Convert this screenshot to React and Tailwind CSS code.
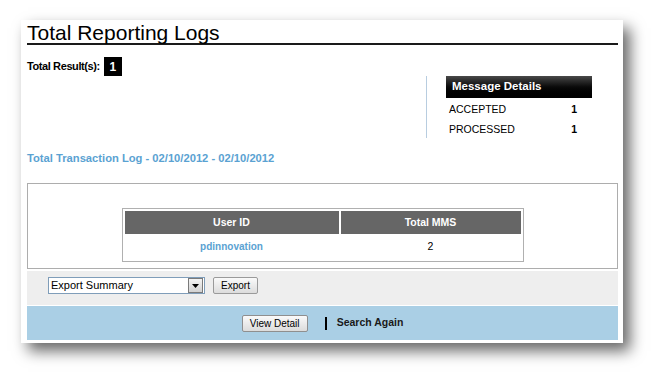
import React from "react";

// Total Reporting Logs panel
const rows = [
  { name: "ACCEPTED", value: 1 },
  { name: "PROCESSED", value: 1 },
];

export default function App() {
  return (
    <div
      className="w-[665px] h-[387px] bg-white pl-[21px] pt-[20px] overflow-hidden"
      style={{ fontFamily: '"Liberation Sans", Arial, sans-serif' }}
    >
      <div className="w-[602px] h-[323px] bg-white shadow-[7px_8px_14px_rgba(0,0,0,0.6)] pl-[6px] pr-[5px] pt-[2px] flex flex-col">
        {/* Titel */}
        <div className="border-b-2 border-[#1a1a1a] text-[21px] leading-[21px] text-black">
          Total Reporting Logs
        </div>

        <div className="mt-[12px] flex items-center gap-[4px]">
          <span className="text-[11px] font-bold tracking-[-0.4px] text-black">
            Total Result(s):
          </span>
          <span className="w-[18px] h-[19px] bg-black text-white text-[12px] font-bold flex items-center justify-center">
            1
          </span>
        </div>

        {/* Message details */}
        <div className="flex justify-end pr-[26px]">
          <div className="border-l border-[#b8cde0] pl-[19px] h-[62px]">
            <div className="w-[146px]">
              <div className="h-[22px] bg-gradient-to-b from-[#4a4a4a] via-[#0a0a0a] to-black text-white text-[11.5px] font-bold pl-[6px] flex items-center">
                Message Details
              </div>
              <div className="pt-[2px]">
                {rows.map((r) => (
                  <div
                    key={r.name}
                    className="h-[20px] flex items-center justify-between pl-[3px] pr-[15px] text-[10.5px] text-black"
                  >
                    <span>{r.name}</span>
                    <span className="font-bold">{r.value}</span>
                  </div>
                ))}
              </div>
            </div>
          </div>
        </div>

        <div className="mt-[14px] text-[11.2px] font-bold text-[#5aa2d2] leading-[13px]">
          Total Transaction Log - 02/10/2012 - 02/10/2012
        </div>

        {/* Tabel */}
        <div className="mt-[18px] h-[86px] border border-[#adadad] flex justify-center pt-[24px]">
          <div className="h-[54px] border border-[#b0b0b0] p-[2px] grid grid-cols-[214px_180px] gap-x-[2px] content-start">
            <div className="h-[23px] bg-[#666666] text-white text-[10.5px] font-bold flex items-center justify-center">
              User ID
            </div>
            <div className="h-[23px] bg-[#666666] text-white text-[10.5px] font-bold flex items-center justify-center">
              Total MMS
            </div>
            <div className="h-[25px] text-[10px] font-bold text-[#5aa2d2] flex items-center justify-center">
              pdinnovation
            </div>
            <div className="h-[25px] text-[10.5px] text-black flex items-center justify-center">
              2
            </div>
          </div>
        </div>

        {/* Export */}
        <div className="mt-[2px] h-[34px] bg-[#eeeeee] pl-[21px] pt-[6px] flex items-start gap-[8px]">
          <div className="w-[157px] h-[17px] bg-white border border-[#7f9db9] flex items-center justify-between">
            <span className="text-[11px] text-black pl-[2px] leading-none">Export Summary</span>
            <span className="w-[15px] h-[15px] mr-px bg-gradient-to-b from-[#f4f4f4] to-[#d2d2d2] border border-[#7a7a7a] flex items-center justify-center">
              <svg width="7" height="4" viewBox="0 0 7 4">
                <path d="M0 0h7L3.5 4z" fill="#000" />
              </svg>
            </span>
          </div>
          <div className="w-[45px] h-[17px] rounded-[2px] border border-[#9a9a9a] bg-gradient-to-b from-[#fafafa] to-[#dcdcdc] text-[10px] text-black flex items-center justify-center">
            Export
          </div>
        </div>

        <div className="mt-px h-[34px] bg-[#aacfe5] flex items-center justify-center">
          <div className="w-[66px] h-[17px] rounded-[2px] border border-[#8f8f8f] bg-gradient-to-b from-[#fafafa] to-[#dcdcdc] text-[10px] text-black flex items-center justify-center">
            View Detail
          </div>
          <div className="ml-[17px] w-[2px] h-[13px] bg-black" />
          <div className="ml-[10px] text-[10.5px] font-bold text-[#1a1a1a]">Search Again</div>
        </div>
      </div>
    </div>
  );
}
